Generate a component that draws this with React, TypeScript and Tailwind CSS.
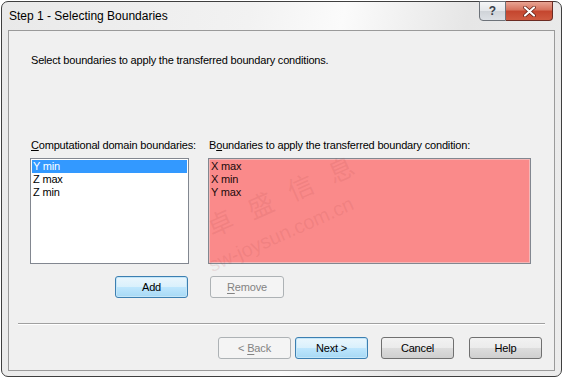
import React from "react";

const font = { fontFamily: '"Liberation Sans", Arial, sans-serif' };

type BtnKind = "normal" | "default" | "disabled";

function WinButton({ label, mnemonic, kind = "normal", width }: { label: string; mnemonic?: number; kind?: BtnKind; width: string }) {
    const base = "h-[22px] flex items-center justify-center rounded-[3px] border text-[11px] leading-none";
    const styles: Record<BtnKind, string> = {
        normal: "border-[#707070] bg-[linear-gradient(#f2f2f2_0%,#ebebeb_50%,#dddddd_51%,#cfcfcf_100%)] text-black",
        default: "border-[#3c7fb1] bg-[linear-gradient(#eaf6fd_0%,#d9f0fc_50%,#bee6fd_51%,#a7d9f5_100%)] text-black shadow-[inset_0_0_0_1px_#c4e6f8]",
        disabled: "border-[#adb2b5] bg-[#f4f4f4] text-[#838383]",
    };
    const chars = label.split("");
    return (
        <div className={`${base} ${styles[kind]} ${width}`}>
            <span>
                {chars.map((c, i) => (
                    <span key={i} className={i === mnemonic ? "underline underline-offset-[2px]" : ""}>{c}</span>
                ))}
            </span>
        </div>
    );
}

export default function App() {
    const left = ["Y min", "Z max", "Z min"];
    const right = ["X max", "X min", "Y max"];

    return (
        <div className="w-[563px] h-[378px] bg-white p-[1px]" style={font}>
            <div className="w-full h-full rounded-[7px] border border-[#3f3f3f] bg-[linear-gradient(100deg,#e9e9e9_0%,#f2f2f2_40%,#fbfbfb_55%,#e6e6e6_75%,#ececec_100%)] flex flex-col px-[6px] pb-[5px]">
                {/* title bar */}
                <div className="h-[28px] flex justify-between">
                    <div className="pt-[8px] pl-[1px] text-[12px] text-black leading-none">Step 1 - Selecting Boundaries</div>
                    <div className="flex mr-[2px] -mt-[1px]">
                        <div className="w-[27px] h-[20px] rounded-bl-[4px] border border-[#6d7279] bg-[linear-gradient(#f5f6f7_0%,#e3e6ea_50%,#cfd3d8_51%,#dde1e6_100%)] flex items-center justify-center text-[12px] text-[#39404a] leading-none font-bold">?</div>
                        <div className="w-[47px] h-[20px] rounded-br-[4px] border border-l-0 border-[#6b2a22] bg-[linear-gradient(#e8a493_0%,#d6715c_45%,#c4452e_50%,#cf5a40_100%)] flex items-center justify-center">
                            <svg width="13" height="11" viewBox="0 0 13 11">
                                <path d="M2 1.5 L11 9.5 M11 1.5 L2 9.5" stroke="#5b1a10" strokeWidth="3.6" strokeLinecap="round" />
                                <path d="M2 1.5 L11 9.5 M11 1.5 L2 9.5" stroke="#ffffff" strokeWidth="2.2" strokeLinecap="round" />
                            </svg>
                        </div>
                    </div>
                </div>

                {/* client area */}
                <div className="relative flex-1 border border-[#9a9a9a] bg-[#f0f0f0] flex flex-col text-[11px] tracking-[-0.18px] text-black leading-[13px] overflow-hidden">
                    <div className="mt-[23px] ml-[22px]">Select boundaries to apply the transferred boundary conditions.</div>

                    <div className="mt-[72px] ml-[21px] flex gap-[19px]">
                        <div className="flex flex-col w-[159px]">
                            <div className="pl-[1px] whitespace-nowrap"><span className="underline">C</span>omputational domain boundaries:</div>
                            <div className="mt-[6px] h-[106px] border border-[#828790] bg-white p-[1px]">
                                {left.map((t, i) => (
                                    <div key={t} className={`pl-[1px] h-[13px] ${i === 0 ? "bg-[#3399ff] text-white" : ""}`}>{t}</div>
                                ))}
                            </div>
                            <div className="mt-[12px] flex justify-end pr-[1px]">
                                <WinButton label="Add" kind="default" width="w-[73px]" />
                            </div>
                        </div>
                        <div className="flex flex-col w-[323px]">
                            <div className="pl-[1px] whitespace-nowrap">B<span className="underline">o</span>undaries to apply the transferred boundary condition:</div>
                            <div className="mt-[6px] h-[106px] border border-[#828790] bg-[#fa8a8a] p-[1px] shadow-[inset_0_0_0_1px_#f4b6b6]">
                                {right.map((t) => (
                                    <div key={t} className="pl-[1px] h-[13px] text-[#1a0a0a]">{t}</div>
                                ))}
                            </div>
                            <div className="mt-[12px] flex pl-[2px]">
                                <WinButton label="Remove" mnemonic={0} kind="disabled" width="w-[74px]" />
                            </div>
                        </div>
                    </div>

                    <div className="mt-[25px] mx-[9px] h-[2px] border-t border-[#a0a0a0] border-b-white border-b" />

                    <div className="mt-[12px] flex justify-end pr-[12px]">
                        <WinButton label="< Back" mnemonic={2} kind="disabled" width="w-[73px]" />
                        <div className="w-[4px]" />
                        <WinButton label="Next >" kind="default" width="w-[73px]" />
                        <div className="w-[13px]" />
                        <WinButton label="Cancel" width="w-[73px]" />
                        <div className="w-[15px]" />
                        <WinButton label="Help" width="w-[73px]" />
                    </div>

                    {/* watermark */}
                    <div className="pointer-events-none absolute left-[205px] top-[180px] origin-bottom-left -rotate-[24deg] text-[26px] leading-[30px] tracking-[18px] whitespace-nowrap text-[rgba(170,70,70,0.13)]" style={{ fontFamily: '"Noto Sans CJK SC", sans-serif' }}>卓盛信息</div>
                    <div className="pointer-events-none absolute left-[205px] top-[223px] origin-bottom-left -rotate-[24deg] text-[20px] leading-[22px] whitespace-nowrap text-[rgba(170,70,70,0.13)]">sw-joysun.com.cn</div>
                </div>
            </div>
        </div>
    );
}
